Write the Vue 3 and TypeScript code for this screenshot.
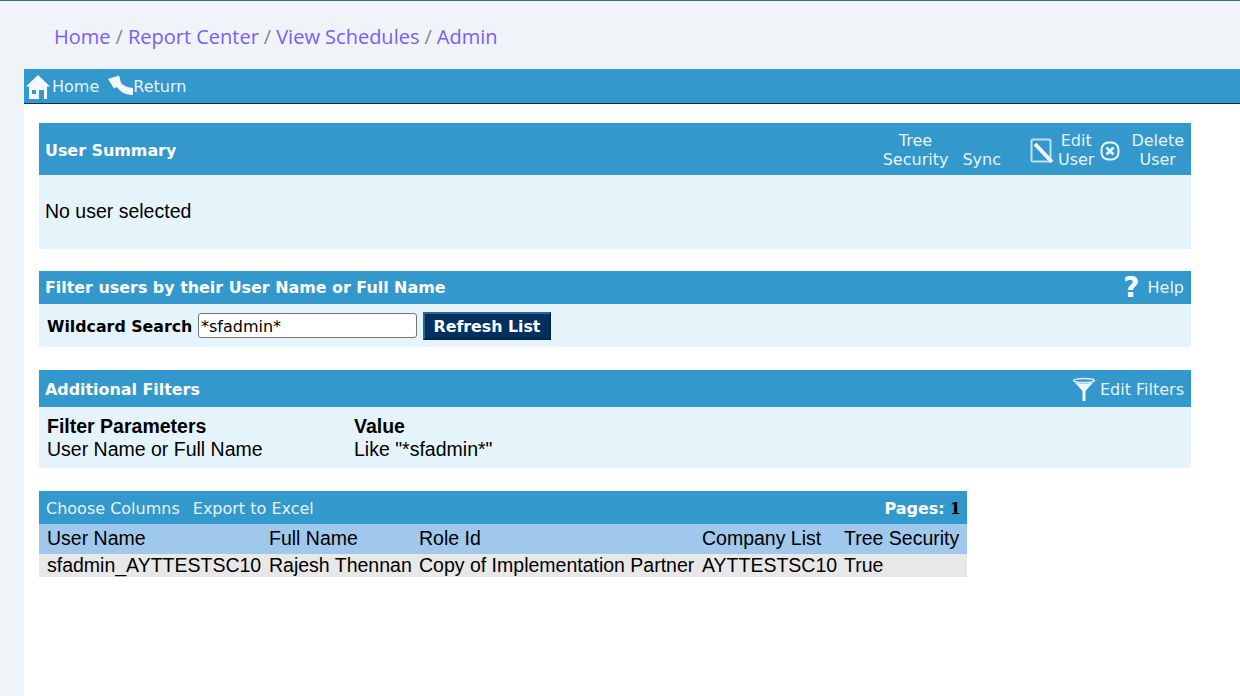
<script setup lang="ts">
const crumbs: string[] = ['Home', 'Report Center', 'View Schedules', 'Admin']
const columns: string[] = ['User Name', 'Full Name', 'Role Id', 'Company List', 'Tree Security']
const row: string[] = ['sfadmin_AYTTESTSC10', 'Rajesh Thennan', 'Copy of Implementation Partner', 'AYTTESTSC10', 'True']
</script>

<template>
  <div class="page">
    <nav class="crumbs">
      <template v-for="(c, i) in crumbs" :key="c">
        <span v-if="i > 0" class="sep">/</span>
        <a class="crumb">{{ c }}</a>
      </template>
    </nav>
    <div class="toolbar">
      <a class="tool">
        <svg class="home-icon" width="26" height="26" viewBox="0 0 26 26">
          <path d="M13 1 L25 12.5 L22 12.5 L22 25 L4 25 L4 12.5 L1 12.5 Z" fill="#f2f8fc" />
          <rect x="7" y="16" width="4" height="4" fill="#3398cc" />
          <rect x="14" y="16" width="5" height="9" fill="#3398cc" />
        </svg>
        <span>Home</span>
      </a>
      <a class="tool return">
        <svg width="25" height="24" viewBox="0 0 25 24">
          <path d="M0 5 L11 1.5 L12 5 L13 9 C16 12 20 13.5 25 14 L25 21 C18 21 12 18 9 13 L6 14.5 Z" fill="#f2f8fc" />
        </svg>
        <span>Return</span>
      </a>
    </div>
    <main class="content">
      <section class="panel">
        <header class="bar bar-summary">
          <h2>User Summary</h2>
          <div class="actions">
            <a class="action tree">Tree<br />Security</a>
            <a class="action sync"><br />Sync</a>
            <svg class="edit-icon" width="24" height="27" viewBox="0 0 24 27">
              <rect x="1.5" y="2.5" width="19" height="22" rx="1.5" fill="none" stroke="#bfe0f0" stroke-width="2" />
              <path d="M5 7 L22 25" stroke="#f2f8fc" stroke-width="4" />
            </svg>
            <a class="action edit">Edit<br />User</a>
            <svg class="x-icon" width="20" height="20" viewBox="0 0 20 20">
              <rect x="1.5" y="1.5" width="17" height="17" rx="7" fill="none" stroke="#eef7fb" stroke-width="2" />
              <path d="M6.5 6.5 L13.5 13.5 M13.5 6.5 L6.5 13.5" stroke="#eef7fb" stroke-width="2.6" />
            </svg>
            <a class="action delete">Delete<br />User</a>
          </div>
        </header>
        <div class="summary-body">No user selected</div>
      </section>

      <section class="panel">
        <header class="bar bar-search">
          <h2>Filter users by their User Name or Full Name</h2>
          <a class="bar-link">
            <span class="qmark">?</span>
            <span>Help</span>
          </a>
        </header>
        <div class="search-body">
          <label class="search-label" for="wild">Wildcard Search</label>
          <input id="wild" class="search-input" type="text" value="*sfadmin*" />
          <button class="refresh" type="button">Refresh List</button>
        </div>
      </section>

      <section class="panel panel-after">
        <header class="bar bar-filters">
          <h2>Additional Filters</h2>
          <a class="bar-link">
            <svg class="funnel" width="24" height="25" viewBox="0 0 24 25">
              <ellipse cx="12" cy="3.5" rx="10.5" ry="2" fill="none" stroke="#dcedf6" stroke-width="1.4" />
              <path d="M2.5 5 L10.5 14 L10.5 24 L13.5 24 L13.5 14 L21.5 5 C16 7 8 7 2.5 5 Z" fill="#eef7fb" />
            </svg>
            <span>Edit Filters</span>
          </a>
        </header>
        <div class="filters-body">
          <div class="filter-col name-col">
            <strong>Filter Parameters</strong>
            <span>User Name or Full Name</span>
          </div>
          <div class="filter-col">
            <strong>Value</strong>
            <span>Like "*sfadmin*"</span>
          </div>
        </div>
      </section>

      <section class="panel grid-panel panel-after">
        <header class="bar bar-grid">
          <div class="grid-links">
            <a>Choose Columns</a>
            <a>Export to Excel</a>
          </div>
          <div class="pages"><b>Pages:</b> <b class="page-num">1</b></div>
        </header>
        <table class="users">
          <colgroup>
            <col class="c1" /><col class="c2" /><col class="c3" /><col class="c4" /><col class="c5" />
          </colgroup>
          <thead>
            <tr><th v-for="c in columns" :key="c">{{ c }}</th></tr>
          </thead>
          <tbody>
            <tr><td v-for="v in row" :key="v">{{ v }}</td></tr>
          </tbody>
        </table>
      </section>
    </main>
  </div>
</template>

<style scoped>
.page {
  height: 696px;
  box-sizing: border-box;
  background: #eff4f8;
  border-top: 1px solid #3f6580;
  padding-left: 24px;
  overflow: hidden;
  font-family: "Liberation Sans", Arial, sans-serif;
  color: #000;
}
.crumbs {
  height: 68px;
  box-sizing: border-box;
  padding: 21px 0 0 30px;
  font-family: "Open Sans", sans-serif;
  font-size: 20px;
  line-height: 30px;
  white-space: nowrap;
}
.crumb { color: #7c5cfc; }
.sep { color: #7f8a94; margin: 0 5px; }
.toolbar {
  height: 34px;
  background: #3398cc;
  border-bottom: 1px solid #04305e;
  display: flex;
  align-items: center;
  font-family: "DejaVu Sans", Verdana, sans-serif;
  font-size: 16px;
  color: #e8f3f9;
}
.tool { display: flex; align-items: center; }
.home-icon { margin: 1px 1px 0 1px; }
.return { margin-left: 9px; }
.return svg { margin-bottom: 1px; }
.content {
  height: 592px;
  background: #fff;
  padding: 19px 0 0 15px;
  box-sizing: border-box;
  display: flex;
  flex-direction: column;
  gap: 22px;
}
.panel { width: 1152px; }
.panel-after { margin-top: 1px; }
.bar {
  background: #3398cc;
  color: #e8f3f9;
  display: flex;
  align-items: center;
  justify-content: space-between;
  padding: 0 7px 0 6px;
  font-family: "DejaVu Sans", Verdana, sans-serif;
  font-size: 16px;
}
.bar h2 { margin: 0; font-size: 15.9px; font-weight: 700; color: #fff; }
.bar-summary { height: 52px; box-sizing: border-box; padding-top: 3px; }
.bar-search { height: 33px; }
.bar-filters { height: 37px; box-sizing: border-box; padding-top: 2px; }
.bar-grid { height: 33px; box-sizing: border-box; padding-top: 2px; }
.actions { display: flex; align-items: center; line-height: 19px; text-align: center; margin-top: -2px; }
.action { display: block; }
.tree { margin-right: 14px; }
.sync { margin-right: 29px; }
.edit-icon { margin: 2px 4px 0 0; }
.edit { margin-right: 6px; }
.x-icon { margin: 2px 11px 0 0; }
.bar-link { display: flex; align-items: center; }
.funnel { margin-right: 4px; }
.summary-body {
  height: 74px;
  box-sizing: border-box;
  background: #e5f4fa;
  padding: 24px 6px 0;
  font-size: 19.5px;
  line-height: 24px;
}
.qmark {
  font-size: 28px;
  font-weight: 700;
  color: #fff;
  line-height: 30px;
  margin-right: 8px;
  font-family: "DejaVu Sans", sans-serif;
}
.search-body {
  height: 43px;
  box-sizing: border-box;
  background: #e5f4fa;
  padding: 0 0 0 8px;
  display: flex;
  align-items: center;
}
.search-label {
  width: 146px;
  padding-top: 2px;
  font-family: "DejaVu Sans", Verdana, sans-serif;
  font-size: 15.8px;
  font-weight: 700;
  white-space: nowrap;
  margin-right: 5px;
}
.search-input {
  width: 219px;
  height: 25px;
  box-sizing: border-box;
  border: 1px solid #767676;
  border-radius: 3px;
  background: #fff;
  padding: 1px 2px 0;
  margin: 0 6px 0 0;
  font-family: "DejaVu Sans", Verdana, sans-serif;
  font-size: 16px;
  color: #000;
  outline: none;
}
.refresh {
  width: 128px;
  height: 28px;
  box-sizing: border-box;
  background: #03305f;
  border: 2px solid;
  border-color: #2f6596 #02264b #02264b #2f6596;
  color: #fff;
  padding: 1px 0 0;
  font-family: "DejaVu Sans", Verdana, sans-serif;
  font-size: 15.8px;
  font-weight: 700;
}
.filters-body {
  height: 61px;
  box-sizing: border-box;
  background: #e5f4fa;
  padding: 8px 0 0 8px;
  display: flex;
  font-size: 19.5px;
  line-height: 23px;
}
.filter-col { display: flex; flex-direction: column; }
.filter-col strong { font-weight: 700; }
.name-col { width: 307px; }
.grid-panel { width: 928px; }
.bar-grid { padding-right: 6px; padding-left: 7px; }
.grid-links { display: flex; gap: 13px; font-size: 16px; }
.pages b { color: #fff; font-size: 16px; }
.pages .page-num { color: #000; font-family: "DejaVu Serif", serif; }
.users {
  width: 928px;
  table-layout: fixed;
  border-collapse: collapse;
  font-size: 19.5px;
  white-space: nowrap;
}
.c1 { width: 222px; }
.c2 { width: 150px; }
.c3 { width: 283px; }
.c4 { width: 142px; }
.c5 { width: 131px; }
.users th {
  height: 30px;
  box-sizing: border-box;
  padding: 0 0 2px 8px;
  background: #a0c8ec;
  text-align: left;
  font-weight: 400;
}
.users td {
  height: 23px;
  padding: 0 0 0 8px;
  background: #e8e8e8;
}
</style>
